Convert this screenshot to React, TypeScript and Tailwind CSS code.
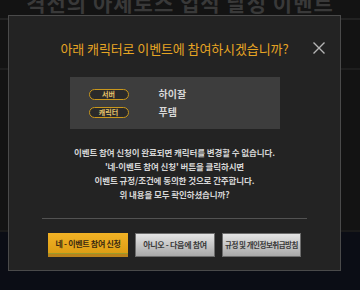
import React from "react";

const font = { fontFamily: '"Noto Sans CJK KR", "Noto Sans", sans-serif' };

const Pill: React.FC<{ label: string }> = ({ label }) => (
    <span className="flex h-[11px] w-[40px] items-center justify-center rounded-full border border-[#c9971c] bg-[#2a2a2a] text-[7px] leading-none font-bold text-[#e6c36a]">
        {label}
    </span>
);

const App: React.FC = () => {
    return (
        <div
            className="relative h-[290px] w-[360px] overflow-hidden bg-[#131313]"
            style={font}
        >
            {/* page behind the dialog */}
            <div className="flex h-full flex-col">
                <div className="-mt-[13px] text-center text-[21px] leading-[30px] font-bold tracking-[1px] text-[#393939]">
                    격전의 아제로스 업적 달성 이벤트
                </div>
                <div className="mt-[1px] h-[2px] bg-[#222]" />
                <div className="mt-[48px] h-[2px] bg-[#1e1e1e]" />
                <div className="mt-[160px] h-[2px] bg-[#1a1a1a]" />
                <div className="flex-1 bg-[#0b0d15]" />
            </div>

            {/* dialog */}
            <div className="absolute top-[15px] left-[8px] flex w-[333px] flex-col items-center border border-[#4a4a4a] bg-[#232323] px-[8px] pt-[25px] pb-[13px]">
                <button className="absolute top-[25px] right-[14px] text-[#b5b5b5]">
                    <svg width="14" height="14" viewBox="0 0 14 14">
                        <path
                            d="M1.5 1.5 L12.5 12.5 M12.5 1.5 L1.5 12.5"
                            stroke="currentColor"
                            strokeWidth="1.4"
                        />
                    </svg>
                </button>

                <h2 className="text-[13px] leading-[16px] tracking-[-0.1px] text-[#e7a523]">
                    아래 캐릭터로 이벤트에 참여하시겠습니까?
                </h2>

                <div className="mt-[20px] flex h-[52px] w-[210px] flex-col justify-center gap-[7px] bg-[#3d3d3d] pl-[19px]">
                    <div className="flex items-center gap-[30px]">
                        <Pill label="서버" />
                        <span className="text-[10px] leading-none font-bold text-[#d8d8d8]">하이잘</span>
                    </div>
                    <div className="flex items-center gap-[30px]">
                        <Pill label="캐릭터" />
                        <span className="text-[10px] leading-none font-bold text-[#d8d8d8]">푸템</span>
                    </div>
                </div>

                <div className="mt-[16px] text-center text-[8.5px] leading-[14px] font-bold tracking-[-0.1px] text-[#d6d6d6]">
                    <p>이벤트 참여 신청이 완료되면 캐릭터를 변경할 수 없습니다.</p>
                    <p>'네-이벤트 참여 신청' 버튼을 클릭하시면</p>
                    <p>이벤트 규정/조건에 동의한 것으로 간주합니다.</p>
                    <p>위 내용을 모두 확인하셨습니까?</p>
                </div>

                <div className="mt-[17px] h-px w-[265px] bg-[#525252]" />

                <div className="mt-[14px] flex gap-[7px]">
                    <button className="flex h-[24px] w-[80px] items-center justify-center border-b-[3px] border-[#b9821a] bg-gradient-to-b from-[#f2b225] to-[#dc9d13] text-[8px] font-bold tracking-[-0.3px] whitespace-nowrap text-[#3a2a10] shadow-[inset_0_-1px_0_#9c9a2a]">
                        네 - 이벤트 참여 신청
                    </button>
                    <button className="flex h-[24px] w-[80px] items-center justify-center border border-[#6d6d6d] bg-gradient-to-b from-[#e4e4e4] to-[#a9a9a9] text-[8px] font-bold tracking-[-0.3px] whitespace-nowrap text-[#3a3a3a]">
                        아니오 - 다음에 참여
                    </button>
                    <button className="flex h-[24px] w-[79px] items-center justify-center border border-[#6d6d6d] bg-gradient-to-b from-[#e4e4e4] to-[#a9a9a9] px-0 text-[7.5px] font-bold tracking-[-0.5px] whitespace-nowrap text-[#3a3a3a]">
                        규정 및 개인정보취급방침
                    </button>
                </div>
            </div>
        </div>
    );
};

export default App;
